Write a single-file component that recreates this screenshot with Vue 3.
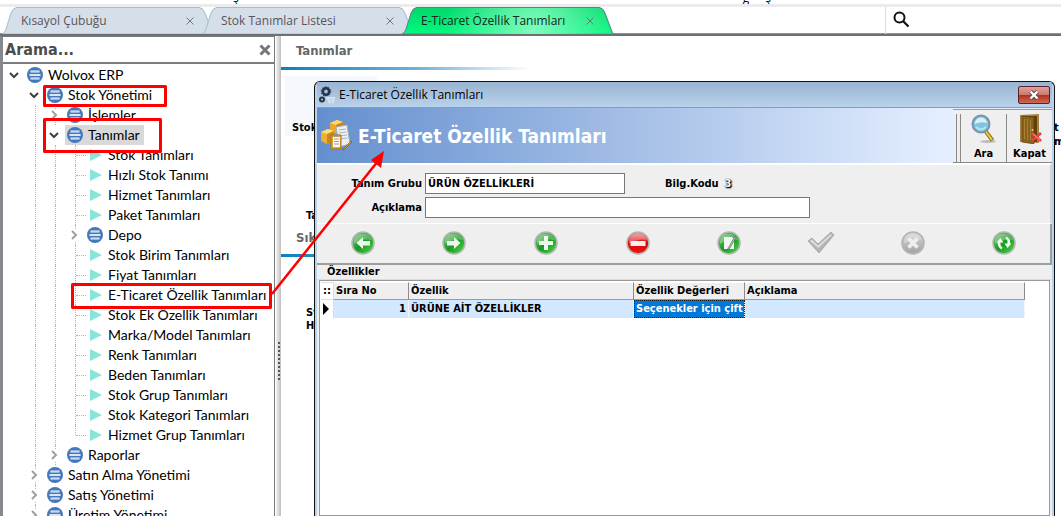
<script setup>
import { ref } from 'vue'

const tabs = [
  { title: 'Kısayol Çubuğu', active: false },
  { title: 'Stok Tanımlar Listesi', active: false },
  { title: 'E-Ticaret Özellik Tanımları', active: true },
]

const leaf = (label, last = false) => ({ label, depth: 3, kind: 'leaf', last })
const tree = [
  { label: 'Wolvox ERP', depth: 0, kind: 'open' },
  { label: 'Stok Yönetimi', depth: 1, kind: 'open' },
  { label: 'İşlemler', depth: 2, kind: 'closed' },
  { label: 'Tanımlar', depth: 2, kind: 'open', selected: true },
  leaf('Stok Tanımları'),
  leaf('Hızlı Stok Tanımı'),
  leaf('Hizmet Tanımları'),
  leaf('Paket Tanımları'),
  { label: 'Depo', depth: 3, kind: 'closed' },
  leaf('Stok Birim Tanımları'),
  leaf('Fiyat Tanımları'),
  leaf('E-Ticaret Özellik Tanımları'),
  leaf('Stok Ek Özellik Tanımları'),
  leaf('Marka/Model Tanımları'),
  leaf('Renk Tanımları'),
  leaf('Beden Tanımları'),
  leaf('Stok Grup Tanımları'),
  leaf('Stok Kategori Tanımları'),
  leaf('Hizmet Grup Tanımları', true),
  { label: 'Raporlar', depth: 2, kind: 'closed' },
  { label: 'Satın Alma Yönetimi', depth: 1, kind: 'closed' },
  { label: 'Satış Yönetimi', depth: 1, kind: 'closed' },
  { label: 'Üretim Yönetimi', depth: 1, kind: 'closed' },
]

const search = ref('')
const group = ref('ÜRÜN ÖZELLİKLERİ')
const description = ref('')

const actions = [
  { name: 'Önceki', tone: 'green', shape: 'left' },
  { name: 'Sonraki', tone: 'green', shape: 'right' },
  { name: 'Ekle', tone: 'green', shape: 'plus' },
  { name: 'Sil', tone: 'red', shape: 'minus' },
  { name: 'Düzenle', tone: 'green', shape: 'edit' },
  { name: 'Onayla', tone: 'none', shape: 'check' },
  { name: 'Vazgeç', tone: 'grey', shape: 'cross' },
  { name: 'Yenile', tone: 'green', shape: 'refresh' },
]
</script>

<template>
  <div class="app">
    <div class="menu-strip"><span>ş</span><span>ğ</span><span>ş</span></div>

    <header class="tab-strip">
      <nav class="tabs">
        <div v-for="t in tabs" :key="t.title" class="tab" :class="{ active: t.active }">
          <svg class="tab-shape" width="214" height="27" viewBox="0 0 214 27">
            <defs>
              <linearGradient id="tabBase" x1="0" y1="0" x2="0" y2="1">
                <stop offset="0" stop-color="#02d76a" />
                <stop offset="1" stop-color="#00fa7e" />
              </linearGradient>
              <radialGradient id="tabGlow" gradientUnits="userSpaceOnUse" cx="134" cy="22" r="90">
                <stop offset="0" stop-color="#80fbbd" />
                <stop offset="1" stop-color="#80fbbd" stop-opacity="0" />
              </radialGradient>
            </defs>
            <path
              d="M2 27 Q5 26 6 22 L11 6 Q13 0.5 17 0.5 H199 Q203 0.5 205 6 L211 22 Q212 26 214 27 Z"
              :fill="t.active ? 'url(#tabBase)' : '#d5dfe9'"
              :stroke="t.active ? '#5b8092' : '#a3bdd3'"
            />
            <path
              v-if="t.active"
              d="M3 27 Q6 26 7 22 L12 6 Q14 1 17 1 H199 Q202 1 204 6 L210 22 Q211 26 213 27 Z"
              fill="url(#tabGlow)"
            />
          </svg>
          <a href="#" class="tab-title">{{ t.title }}</a>
          <button class="tab-close" :aria-label="'Kapat: ' + t.title">
            <svg width="8" height="8" viewBox="0 0 8 8"><path d="M.5 .5 7.5 7.5M7.5 .5 .5 7.5" stroke="#6d7780" fill="none" /></svg>
          </button>
        </div>
      </nav>
      <button class="global-search" aria-label="Ara">
        <svg width="18" height="18" viewBox="0 0 18 18">
          <circle cx="6.5" cy="6.5" r="5" fill="none" stroke="#111" stroke-width="2" />
          <path d="M10 10 15.5 15.5" stroke="#111" stroke-width="2.2" />
        </svg>
      </button>
    </header>

    <div class="body">
      <aside class="sidebar">
        <div class="search-row">
          <input v-model="search" type="text" placeholder="Arama..." aria-label="Arama" />
          <button aria-label="Temizle">
            <svg width="12" height="12" viewBox="0 0 12 12"><path d="M1.500 1.500 10.500 10.500M10.500 1.500 1.500 10.500" stroke="#777" stroke-width="3" /></svg>
          </button>
        </div>
        <ul class="tree">
          <li v-for="n in tree" :key="n.label" class="node">
            <span
              v-for="j in n.depth + 1"
              :key="j"
              class="cell"
              :class="{
                line: j > 1 && !(j === n.depth + 1 && n.kind === 'open'),
                half: n.last && j === n.depth + 1,
                stub: j === n.depth + 1 && n.kind === 'leaf',
              }"
            >
              <svg v-if="j === n.depth + 1 && n.kind === 'open'" class="chev" width="12" height="12" viewBox="0 0 12 12">
                <path d="M2 4 6 8 10 4" fill="none" stroke="#404040" stroke-width="2" />
              </svg>
              <svg v-if="j === n.depth + 1 && n.kind === 'closed'" class="chev" width="12" height="12" viewBox="0 0 12 12">
                <path d="M4 2 8 6 4 10" fill="none" stroke="#a0a0a0" stroke-width="2" />
              </svg>
            </span>
            <a href="#" class="item" :class="{ selected: n.selected }">
              <span class="ico">
                <svg v-if="n.kind === 'leaf'" width="16" height="16" viewBox="0 0 16 16"><path d="M3 2 15 8 3 14Z" fill="#8ae4d8" /></svg>
                <svg v-else width="16" height="16" viewBox="0 0 16 16">
                  <circle cx="8" cy="8" r="8" fill="#4478bd" />
                  <path d="M3.5 4.5h9M2.5 8h11M3.5 11.5h9" stroke="#f2f6fb" stroke-width="2" />
                  <path d="M3.5 4.5h9M2.5 8h11M3.5 11.5h9" stroke="#a9c1e2" stroke-width="0.6" />
                </svg>
              </span>
              <span class="label">{{ n.label }}</span>
            </a>
          </li>
        </ul>
      </aside>

      <div class="splitter">
        <span v-for="i in 10" :key="i" class="grip"></span>
      </div>

      <main class="workspace">
        <section>
          <h2>Tanımlar</h2>
          <div class="rule"></div>
          <div class="shortcuts">
            <div class="card lit"><span>Stok</span></div>
            <div class="card-right"><span>t</span><span>m</span></div>
          </div>
          <p class="shortcut far">Ta</p>
        </section>
        <section class="second">
          <h2>Sık</h2>
          <div class="rule"></div>
          <p class="shortcut pair">St<br />H</p>
        </section>
      </main>
    </div>

    <section class="dialog" role="dialog" aria-labelledby="dlgTitle">
      <div class="dialog-inner">
        <div class="title-bar">
          <svg width="18" height="18" viewBox="0 0 18 18">
            <circle cx="8" cy="5.500" r="3.200" fill="none" stroke="#24364c" stroke-width="2.600" />
            <circle cx="8" cy="5.500" r="4.800" fill="none" stroke="#24364c" stroke-dasharray="1.500 1.500" />
            <circle cx="4" cy="13.500" r="2" fill="none" stroke="#24364c" stroke-width="2" />
            <path d="M8 11h1l1.500 4h5l1-3.500h-7M9.500 13h6.500" fill="none" stroke="#dfe7ef" stroke-width="1.200" />
            <circle cx="11.500" cy="16.500" r="1" fill="#dfe7ef" /><circle cx="15" cy="16.500" r="1" fill="#dfe7ef" />
          </svg>
          <span id="dlgTitle">E-Ticaret Özellik Tanımları</span>
          <button class="win-close" aria-label="Pencereyi kapat">
            <svg width="12" height="10" viewBox="0 0 12 10">
              <path d="M2.500 1.500 9.500 8.500M9.500 1.500 2.500 8.500" stroke="#5a4a50" stroke-width="4.200" />
              <path d="M2.500 1.500 9.500 8.500M9.500 1.500 2.500 8.500" stroke="#fff" stroke-width="2.400" />
            </svg>
          </button>
        </div>

        <div class="banner">
          <svg width="34" height="34" viewBox="0 0 34 34">
            <path d="M10 4 17 1 23 3V12L16 15 10 12Z" fill="#e9a92c" />
            <path d="M10 4 17 1 23 3 16 6Z" fill="#ffd672" />
            <path d="M16 6 23 3V12L16 15Z" fill="#c98512" />
            <path d="M1 13 8 10 14 12V22L7 25 1 22Z" fill="#eeb033" />
            <path d="M1 13 8 10 14 12 7 15Z" fill="#ffdb80" />
            <path d="M7 15 14 12V22L7 25Z" fill="#cd8914" />
            <path d="M16 8 27 6 30 25 19 28Z" fill="#eceff2" stroke="#a5adb7" />
            <path d="M18.500 11 26 10M19 14 26.500 13M19.500 17 27 16M20 20 27.500 19" stroke="#adb7c2" />
            <path d="M11 16h10v14H11Z" fill="#e1a33a" stroke="#a8731b" />
            <path d="M13 18h7v10h-7Z" fill="#fffdf5" />
            <path d="M14 20h5M14 22.500h5M14 25h5" stroke="#999" />
            <path d="M13.500 15h5v2.500h-5Z" fill="#8b8f96" />
            <path d="M31 22 24 29 22.500 31 25 30 32 23Z" fill="#dba23b" stroke="#75572a" stroke-width=".7" />
          </svg>
          <h1>E-Ticaret Özellik Tanımları</h1>
          <div class="toolbar">
            <button class="tool">
              <svg width="26" height="30" viewBox="0 0 26 30">
                <ellipse cx="17" cy="27.500" rx="8" ry="1.500" fill="#bdbdbd" />
                <path d="M14.500 17 21.500 26.500" stroke="#8c741d" stroke-width="4" />
                <path d="M14.500 17 21 26" stroke="#edce45" stroke-width="2" />
                <circle cx="10" cy="10" r="8.500" fill="#7fc5dd" stroke="#7b91ac" stroke-width="2" />
                <path d="M4 10a6 6 0 0 1 12-1Q10 7 4 10Z" fill="#d6f1fa" />
                <path d="M5 13q5 5 10 0" fill="none" stroke="#a9e8f1" stroke-width="2" />
              </svg>
              Ara
            </button>
            <button class="tool">
              <svg width="26" height="30" viewBox="0 0 26 30">
                <path d="M3 1 22 0V29L3 28Z" fill="#a9803f" />
                <path d="M5 2H20V28H5Z" fill="#5e410f" />
                <path d="M5 2 17 3V30L5 28Z" fill="#87601b" stroke="#5a3d0c" stroke-width=".6" />
                <path d="M7.500 5v20M10.500 5v21M13.500 6v20" stroke="#aa8234" />
                <circle cx="15.500" cy="16" r="1" fill="#ecd27c" />
                <path d="M15 19 24 27M24 19 15 27" stroke="#e8403f" stroke-width="2.800" />
                <path d="M16 20 23 26" stroke="#ff9590" />
              </svg>
              Kapat
            </button>
          </div>
        </div>

        <form class="fields" @submit.prevent>
          <label for="grp">Tanım Grubu</label>
          <div class="line-one">
            <input id="grp" v-model="group" type="text" />
            <span class="code-label">Bilg.Kodu</span>
            <span class="code">3</span>
          </div>
          <label for="desc">Açıklama</label>
          <input id="desc" v-model="description" type="text" class="wide" />
        </form>

        <div class="actions">
          <button v-for="a in actions" :key="a.name" :aria-label="a.name">
            <svg width="28" height="26" viewBox="0 0 28 26">
              <defs>
                <linearGradient id="gGreen" x1="0" y1="0" x2="1" y2="1">
                  <stop offset="0" stop-color="#8ac98a" /><stop offset=".5" stop-color="#159b20" /><stop offset="1" stop-color="#57d84c" />
                </linearGradient>
                <linearGradient id="gRed" x1="0" y1="0" x2="0" y2="1">
                  <stop offset="0" stop-color="#ee9090" /><stop offset=".5" stop-color="#db0505" /><stop offset="1" stop-color="#f31515" />
                </linearGradient>
                <linearGradient id="gGrey" x1="0" y1="0" x2="0" y2="1">
                  <stop offset="0" stop-color="#d3d3d3" /><stop offset="1" stop-color="#a3a3a3" />
                </linearGradient>
              </defs>
              <circle
                v-if="a.tone !== 'none'"
                cx="14" cy="13" r="11"
                :fill="a.tone === 'green' ? 'url(#gGreen)' : a.tone === 'red' ? 'url(#gRed)' : 'url(#gGrey)'"
                stroke="#b3b8b3" stroke-width="1.600"
              />
              <path v-if="a.tone !== 'none'" d="M5 10a9.500 9.500 0 0 1 18 0Q14 8 5 14Z" fill="#fff" opacity=".28" />
              <path v-if="a.shape === 'left'" d="M7.500 13 14 7v4h7v4.500h-7V19Z" fill="#eef6ee" />
              <path v-if="a.shape === 'right'" d="M20.500 13 14 7v4H7v4.500h7V19Z" fill="#eef6ee" />
              <path v-if="a.shape === 'plus'" d="M12 6h4v5h5v4h-5v5h-4v-5H7v-4h5Z" fill="#eef6ee" />
              <path v-if="a.shape === 'minus'" d="M6.500 11h15v5h-15Z" fill="#f8eeee" />
              <g v-if="a.shape === 'edit'">
                <path d="M9 7h8l2 2v10H9Z" fill="#f2f7f2" />
                <path d="M20 6 14 17l-2 3 3-2 6-11Z" fill="#dfe6df" stroke="#50705a" stroke-width=".8" />
              </g>
              <g v-if="a.shape === 'check'">
                <path d="M1 11 5 8l6 6L24 2l3 3L12 23Z" fill="#b4b4b4" stroke="#a2a2a2" stroke-width=".8" />
                <path d="M3 11l2-1.500 6 6L24 4l1 1L11.500 18Z" fill="#dedede" />
              </g>
              <path v-if="a.shape === 'cross'" d="M9.500 8.500 18.500 17.500M18.500 8.500 9.500 17.500" stroke="#efefef" stroke-width="3.800" />
              <g v-if="a.shape === 'refresh'" fill="none" stroke="#eef6ee" stroke-width="2.600">
                <path d="M12 18.500a6 6 0 0 1-2.500-7" /><path d="M16 7.500a6 6 0 0 1 2.500 7" />
                <path d="M6.500 12.500 10.500 8l3 4.500ZM21.500 13.500 17.500 18l-3-4.500Z" fill="#eef6ee" stroke="none" />
              </g>
            </svg>
          </button>
        </div>

        <fieldset class="grid-box">
          <legend>Özellikler</legend>
          <div class="grid-frame">
            <table>
              <colgroup><col class="c-mark" /><col class="c-no" /><col class="c-name" /><col class="c-val" /><col /></colgroup>
              <thead>
                <tr><th class="mark">::</th><th>Sıra No</th><th>Özellik</th><th>Özellik Değerleri</th><th>Açıklama</th></tr>
              </thead>
              <tbody>
                <tr>
                  <td class="mark"><svg width="6" height="12" viewBox="0 0 6 12"><path d="M0 0 6 6 0 12Z" fill="#000" /></svg></td>
                  <td class="num">1</td><td>ÜRÜNE AİT ÖZELLİKLER</td><td class="focus">Seçenekler için çift</td><td></td>
                </tr>
              </tbody>
            </table>
          </div>
        </fieldset>
      </div>
    </section>

    <svg class="notes" width="400" height="320" viewBox="0 0 400 320">
      <g fill="none" stroke="#f00" stroke-width="3" stroke-linejoin="round">
        <rect x="44.500" y="86.500" width="121" height="19" />
        <rect x="44.500" y="119.500" width="116" height="32" />
        <rect x="72.500" y="284.500" width="198" height="23" />
        <path d="M272 294 378 161" stroke-width="2.500" />
      </g>
      <path d="M384 151 371 160 381 168Z" fill="#f00" />
    </svg>
  </div>
</template>

<style>
body { margin: 0; background: #fff; }
</style>

<style scoped>
* { box-sizing: border-box; }
button { padding: 0; border: 0; background: none; color: inherit; font: inherit; display: grid; place-items: center; }
svg { display: block; flex: none; }
a { color: inherit; text-decoration: none; }
.app {
  position: relative;
  height: 100vh;
  overflow: hidden;
  display: flex;
  flex-direction: column;
  color: #000;
  font: bold 11px/14px "DejaVu Sans Condensed", "DejaVu Sans", sans-serif;
}
.menu-strip { height: 7px; flex: none; border-bottom: 3px solid #ebebeb; overflow: hidden; display: flex; padding-left: 233px; font: 12px/14px "Open Sans", sans-serif; }
.menu-strip span { height: 14px; margin-top: -9px; }
.menu-strip span:nth-child(2) { margin-left: 504px; }
.menu-strip span:nth-child(3) { margin-left: 16px; }

.tab-strip { display: flex; height: 29px; flex: none; border-bottom: 2px solid #6d6f72; box-shadow: inset 0 -1px #7f9ab8; }
.tabs { display: flex; flex: 1; border-right: 1px solid #dedede; }
.tab { position: relative; width: 200px; padding: 0 6px 0 21px; display: flex; align-items: center; justify-content: space-between; font: 12px/16px "Open Sans", sans-serif; color: #5a5358; }
.tab.active { color: #10281c; }
.tab-shape { position: absolute; left: 0; top: 0; }
.tab-title { position: relative; white-space: nowrap; }
.tab-close { position: relative; }
.global-search { width: 175px; padding: 0 0 2px 7px; justify-items: start; }

.body { flex: 1; min-height: 0; display: flex; }
.sidebar { width: 275px; border: 1px solid #777b80; border-left: 3px solid #85888c; border-bottom: 0; display: flex; flex-direction: column; overflow: hidden; background: #fff; }
.search-row { display: flex; align-items: center; height: 27px; flex: none; border-bottom: 2px solid #7a7d82; padding: 0 3px 0 2px; }
.search-row input { flex: 1; min-width: 0; padding: 0; border: 0; outline: 0; background: none; color: #4c4c4c; font: bold 16px/22px "DejaVu Sans Condensed", sans-serif; }
.search-row input::placeholder { color: #4c4c4c; opacity: 1; }
.tree { list-style: none; margin: 0; padding: 1px 0 0 1px; font: 14px/20px Lato, "Noto Sans", sans-serif; }
.node { display: flex; height: 20px; }
.cell { position: relative; width: 20px; flex: none; display: grid; place-items: center; }
.cell.line::before { content: ""; position: absolute; left: 11px; top: 0; bottom: 0; border-left: 1px dotted #b5b5b5; }
.cell.half::before { bottom: 10px; }
.cell.stub::after { content: ""; position: absolute; left: 12px; width: 10px; top: 10px; border-top: 1px dotted #b5b5b5; }
.chev { position: relative; background: #fff; }
.item { display: flex; align-items: center; margin-left: 1px; padding-right: 4px; white-space: nowrap; }
.item.selected { background: #d9d9d9; }
.ico { width: 23px; padding-left: 2px; flex: none; }

.splitter { width: 6px; border-left: 1px solid #fff; background: linear-gradient(90deg, #f2f2f2, #bfbfbf); display: flex; flex-direction: column; align-items: center; gap: 2px; padding-top: 306px; }
.grip { width: 2px; height: 2px; background: #555; flex: none; }

.workspace { flex: 1; min-width: 0; overflow: hidden; }
.workspace h2 { margin: 0; padding: 7px 15px 8px; font: bold 13px/16px "DejaVu Sans Condensed", sans-serif; color: #666; }
.rule { height: 3px; width: 250px; background: linear-gradient(90deg, #0a7fc0, #6fb3dc 55%, #fff); }
.shortcuts { display: flex; justify-content: space-between; padding: 6px 0 0 4px; }
.card { width: 92px; height: 60px; padding: 45px 0 0 7px; }
.card.lit { background: #f5f9fe; }
.card-right { width: 7px; height: 60px; padding-top: 45px; display: flex; flex-direction: column; }
.shortcut { margin: 0; padding-left: 25px; }
.far { padding-top: 73px; }
.second .pair { padding-top: 49px; line-height: 13px; }

.dialog { position: absolute; left: 314px; right: 6px; top: 81px; bottom: 0; border: 1px solid #111; border-bottom: 0; border-radius: 6px 6px 0 0; background: #b9d1ea; padding: 0 2px; overflow: hidden; }
.dialog-inner { height: 100%; display: flex; flex-direction: column; background: #efefef; }
.title-bar { display: flex; align-items: center; height: 26px; flex: none; padding: 0 2px 0 1px; gap: 3px; border-bottom: 1px solid #8f9aa6; background: linear-gradient(#98b4d2, #bad2eb); font: 12px/16px "Open Sans", sans-serif; }
.win-close { margin-left: auto; width: 32px; height: 18px; border: 1px solid #5c2030; border-radius: 2px; background: linear-gradient(#dfa098, #cf7a6c 48%, #b4301c 52%, #cc6a58); }
.banner { display: flex; align-items: center; gap: 4px; height: 55px; flex: none; padding-left: 3px; background: linear-gradient(90deg, #648fce, #e4eeff 85%); }
.banner h1 { margin: 0; font: bold 19px/24px "DejaVu Sans Condensed", sans-serif; color: #fff; white-space: nowrap; }
.toolbar { display: flex; margin-left: auto; align-self: stretch; margin-top: 1px; padding: 4px 0 0 3px; background: #efefef; border-top: 1px solid #999; border-bottom: 1px solid #888; }
.toolbar::before { content: ""; width: 3px; border-left: 1px solid #888; }
.tool { width: 46px; border-left: 1px solid #888; align-content: start; row-gap: 3px; }
.fields { display: grid; grid-template-columns: 105px 1fr; column-gap: 3px; row-gap: 3px; align-items: center; padding: 8px 0 5px; border-top: 2px solid #fff; border-bottom: 1px solid #fff; border-right: 2px solid #d5d5d5; flex: none; }
.fields label { text-align: right; }
.fields input { height: 21px; border: 1px solid #777; background: #fff; padding: 0 2px; font: inherit; outline: 0; width: 200px; }
.fields .wide { width: 385px; }
.line-one { display: flex; align-items: center; }
.code-label { margin-left: 40px; }
.code { margin-left: 6px; color: #f4faff; text-shadow: 0 0 1px #000, 1px 1px 1px #000, 1px 1px 2px #333; }
.actions { display: grid; grid-template-columns: repeat(8, 1fr); height: 41px; padding-bottom: 2px; flex: none; border-bottom: 2px solid #9a9e9c; border-right: 2px solid #9a9e9c; }
.grid-box { flex: 1; min-height: 0; min-width: 0; margin: 0; padding: 1px 2px 0; border: 0; display: flex; flex-direction: column; background: linear-gradient(#dcdcdc, #dcdcdc) 0 7px / 100% 1px no-repeat; }
.grid-box legend { padding: 0 3px; margin-left: 5px; background: #efefef; }
.grid-frame { height: 400px; border: 1px solid #999; background: #fff; padding: 1px 24px 0 1px; }
table { width: 100%; border-collapse: separate; border-spacing: 0; table-layout: fixed; }
.c-mark { width: 13px; } .c-no { width: 75px; } .c-name { width: 225px; } .c-val { width: 111px; }
th, td { height: 18px; padding: 0 2px; text-align: left; white-space: nowrap; overflow: hidden; line-height: 16px; }
th { background: #efefef; border-right: 1px solid #8c8c8c; border-bottom: 1px solid #9a9a9a; border-top: 1px solid #fff; }
td { background: #d1e8ff; border-right: 1px solid #f4f4f4; }
th.mark, td.mark { background: #fff; border-color: #ddd; }
.num { text-align: right; }
td.focus { background: #0078d7; color: #fff; outline: 1px dotted #222; outline-offset: -1px; padding: 0 0 0 2px; }
.notes { position: absolute; left: 0; top: 0; pointer-events: none; }
</style>
